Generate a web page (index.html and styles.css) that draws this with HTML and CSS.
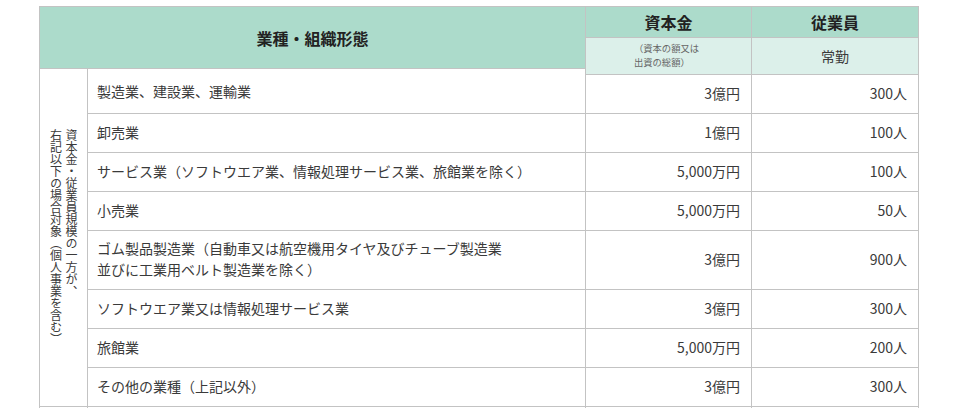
FILE: index.html
```html
<!DOCTYPE html>
<html lang="ja">
<head>
<meta charset="utf-8">
<link rel="stylesheet" href="styles.css">
</head>
<body>
<div class="wrap">
  <div class="grid">
    <div class="h-main">業種・組織形態</div>
    <div class="h-top cap">資本金</div>
    <div class="h-top emp">従業員</div>
    <div class="h-sub cap"><span class="note">（資本の額又は<br>出資の総額）</span></div>
    <div class="h-sub emp">常勤</div>
    <div class="side"><span class="vtext">資本金・従業員規模の一方が、<br>右記以下の場合対象（個人事業を含む）</span></div>
    <div class="name first">製造業、建設業、運輸業</div>
    <div class="num first-cap">3億円</div>
    <div class="num first-emp">300人</div>

    <div class="name">卸売業</div>
    <div class="num">1億円</div>
    <div class="num">100人</div>

    <div class="name">サービス業（ソフトウエア業、情報処理サービス業、旅館業を除く）</div>
    <div class="num">5,000万円</div>
    <div class="num">100人</div>

    <div class="name">小売業</div>
    <div class="num">5,000万円</div>
    <div class="num">50人</div>

    <div class="name two">ゴム製品製造業（自動車又は航空機用タイヤ及びチューブ製造業<br>並びに工業用ベルト製造業を除く）</div>
    <div class="num">3億円</div>
    <div class="num">900人</div>

    <div class="name">ソフトウエア業又は情報処理サービス業</div>
    <div class="num">3億円</div>
    <div class="num">300人</div>

    <div class="name">旅館業</div>
    <div class="num">5,000万円</div>
    <div class="num">200人</div>

    <div class="name">その他の業種（上記以外）</div>
    <div class="num">3億円</div>
    <div class="num">300人</div>

    <div class="pad"></div>
    <div class="pad"></div>
    <div class="pad"></div>
    <div class="pad"></div>
  </div>
</div>
</body>
</html>
```
FILE: styles.css
```css
html, body {
  margin: 0;
  padding: 0;
  background: #ffffff;
  overflow: hidden;
  height: 408px;
}
body {
  font-family: "Noto Sans CJK JP", "Noto Sans", sans-serif;
  color: #3a3a3a;
  font-size: 14px;
}
.wrap {
  padding: 6px 0 0 39px;
}
.grid {
  display: grid;
  width: 880px;
  box-sizing: border-box;
  grid-template-columns: 48px 498px 166px 167px;
  grid-template-rows: 31px 31px 6px 39px 39px 39px 39px 59px 39px 39px 39px 20px;
  border-top: 1px solid #c3c3c3;
  border-left: 1px solid #c3c3c3;
}
.grid > div {
  box-sizing: border-box;
  border-right: 1px solid #c3c3c3;
  border-bottom: 1px solid #c3c3c3;
  display: flex;
  align-items: center;
  min-width: 0;
}
.h-main {
  grid-column: 1 / 3;
  grid-row: 1 / 3;
  background: #acdbcb;
  justify-content: center;
  font-weight: bold;
  font-size: 16px;
  color: #222222;
}
.h-top {
  grid-row: 1;
  background: #acdbcb;
  justify-content: center;
  font-weight: bold;
  font-size: 16px;
  color: #222222;
}
.h-top.cap { grid-column: 3; }
.h-top.emp { grid-column: 4; }
.h-sub {
  grid-row: 2 / 4;
  background: #dcf0ea;
  justify-content: center;
  font-size: 14px;
  color: #3a3a3a;
}
.h-sub.cap { grid-column: 3; }
.h-sub.emp { grid-column: 4; }
.note {
  display: inline-block;
  text-align: left;
  font-size: 9.3px;
  line-height: 13.5px;
  color: #666666;
  margin-left: -4px;
  margin-top: -1px;
}
.side {
  grid-column: 1;
  grid-row: 3 / 12;
  justify-content: center;
}
.vtext {
  writing-mode: vertical-rl;
  font-size: 12px;
  line-height: 15.6px;
  color: #3a3a3a;
  margin-top: -2px;
}
.name {
  grid-column: 2;
  padding-left: 9px;
  padding-bottom: 2px;
  line-height: 21px;
}
.name.first {
  grid-row: 3 / 5;
  padding-top: 3px;
}
.num {
  justify-content: flex-end;
  padding-right: 11px;
  padding-bottom: 2px;
}
.first-cap { grid-column: 3; grid-row: 4; }
.first-emp { grid-column: 4; grid-row: 4; }
```
